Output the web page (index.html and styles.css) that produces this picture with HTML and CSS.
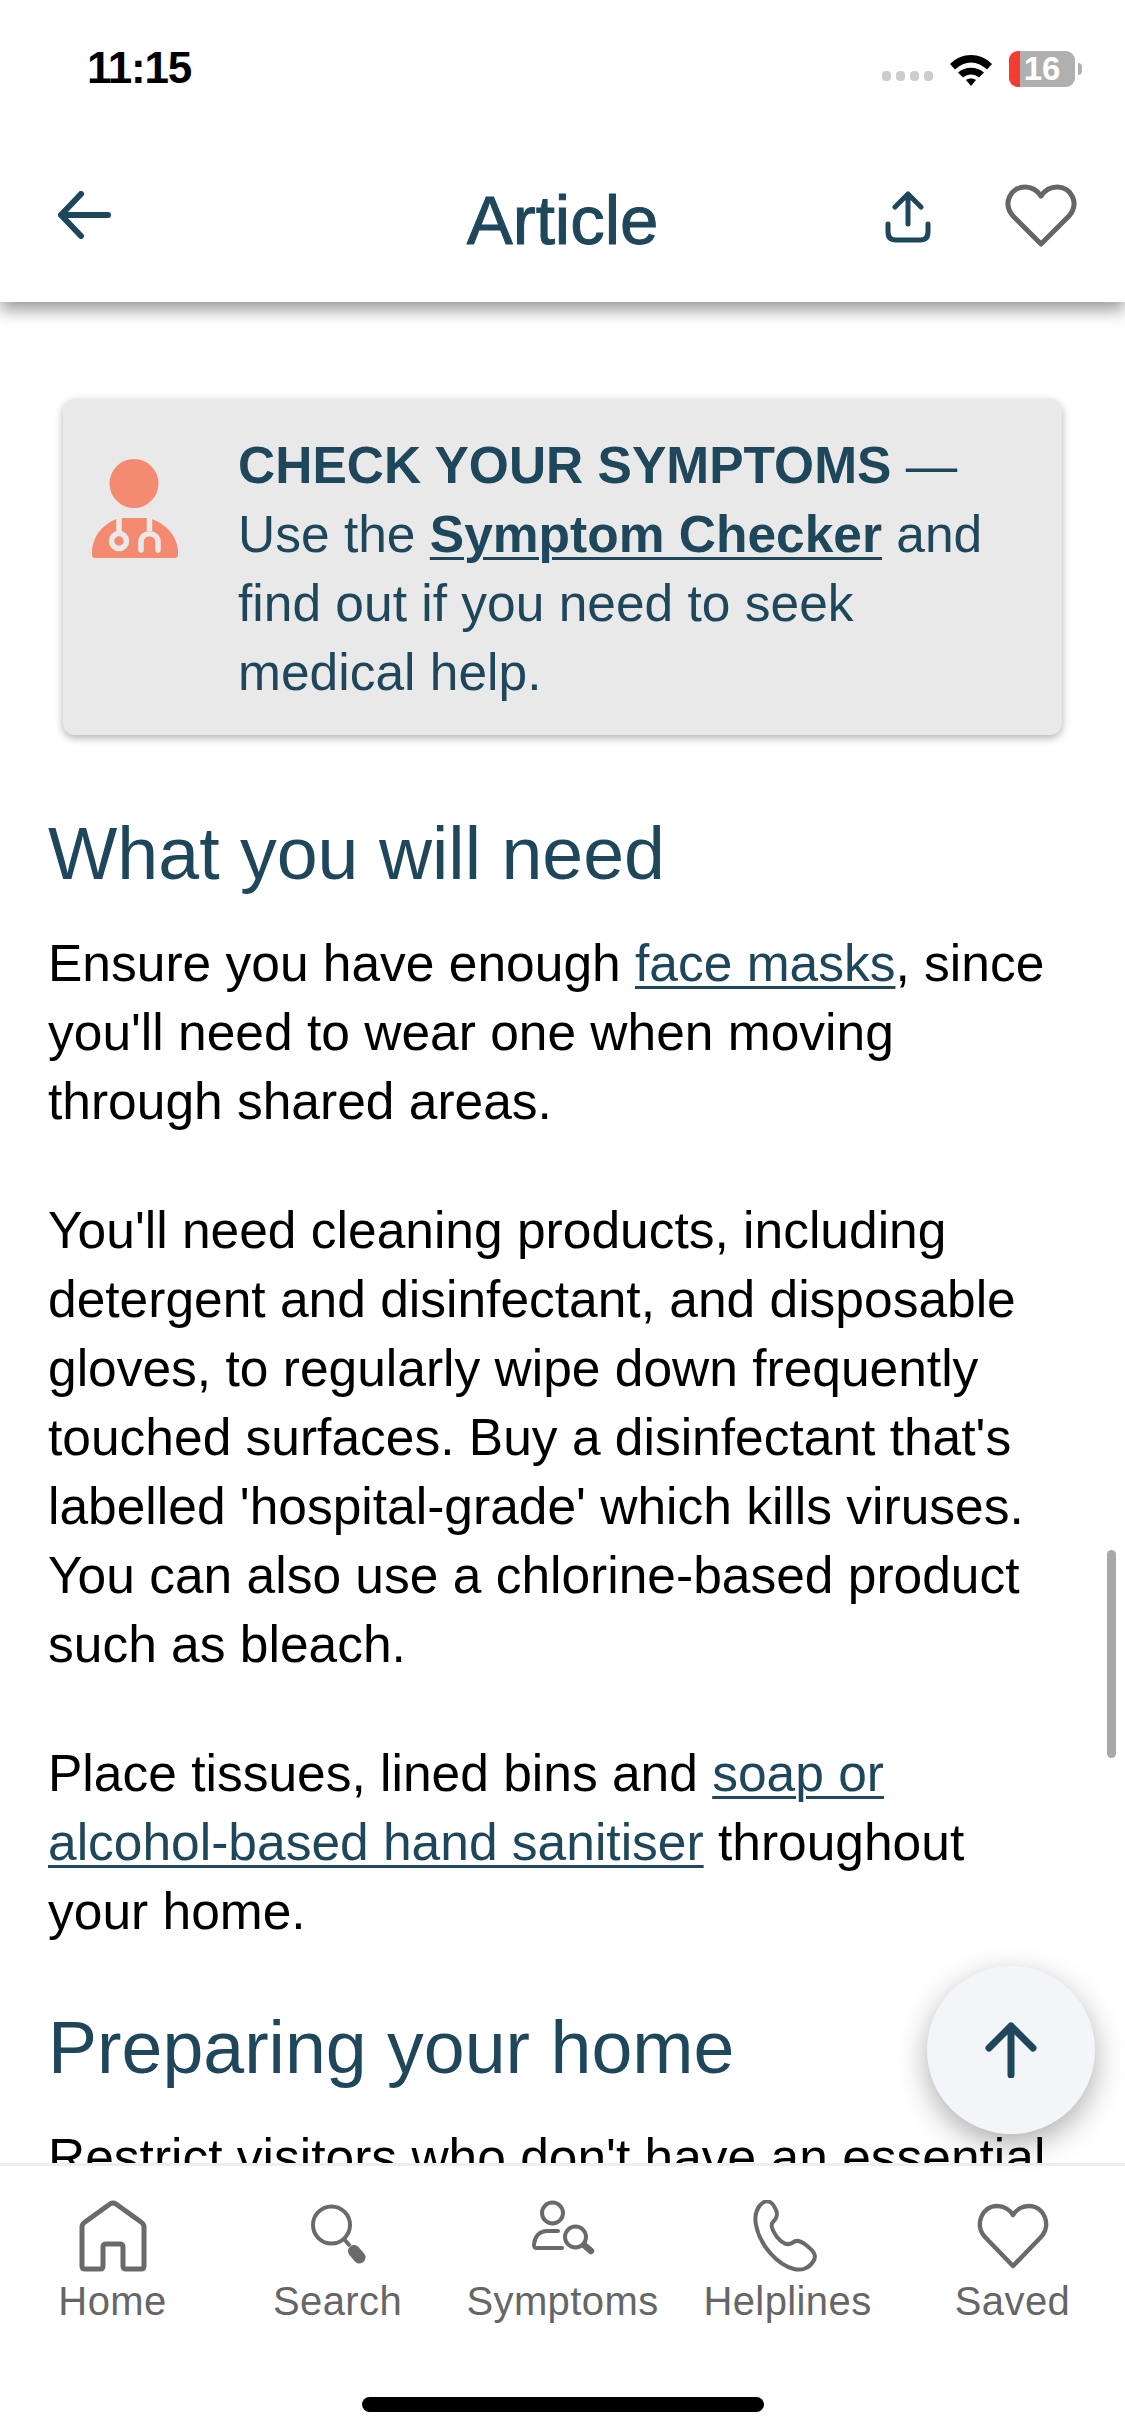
FILE: index.html
```html
<!DOCTYPE html>
<html lang="en">
<head>
    <meta charset="UTF-8">
    <title>Article</title>
    <link rel="stylesheet" href="styles.css">
</head>
<body>
    <div class="phone">
        <div class="status-bar">
            <span class="time">11:15</span>
            <div class="status-icons">
                <div class="signal"><i></i><i></i><i></i><i></i></div>
                <svg class="wifi" width="46" height="33" viewBox="0 0 44 33">
                    <path d="M1 11 C13 -1 31 -1 43 11 L38 16.500 C28 7 16 7 6 16.500 Z" fill="#000"/>
                    <path d="M9 19.500 C16 13 28 13 35 19.500 L30 24.500 C25 20.500 19 20.500 14 24.500 Z" fill="#000"/>
                    <path d="M17 27 C20 25 24 25 27 27 L22 33 Z" fill="#000"/>
                </svg>
                <div class="battery">
                    <div class="battery-body"><span class="battery-low"></span><span class="battery-num">16</span></div>
                    <span class="battery-cap"></span>
                </div>
            </div>
        </div>

        <header class="top-bar">
            <svg class="back" width="54" height="48" viewBox="0 0 54 48">
                <path d="M24 3 L4 24 L24 45 M4 24 H51" fill="none" stroke="#1f475c" stroke-width="6" stroke-linecap="round" stroke-linejoin="round"/>
            </svg>
            <h1>Article</h1>
            <div class="top-actions">
                <svg class="share" width="46" height="52" viewBox="0 0 46 52">
                    <path d="M23 33 V3 M10 16 L23 3 L36 16 M3 33 V41 Q3 49 11 49 H35 Q43 49 43 41 V33" fill="none" stroke="#1f475c" stroke-width="5" stroke-linecap="round" stroke-linejoin="round"/>
                </svg>
                <svg width="72" height="64" viewBox="0 0 72 64">
                    <path d="M36 61 L8 33 C-3 20 6 4 20 4 C27 4 32 7 36 13 C40 7 45 4 52 4 C66 4 75 20 64 33 Z" fill="none" stroke="#666" stroke-width="5" stroke-linejoin="round"/>
                </svg>
            </div>
        </header>

        <main class="content">
            <div class="callout">
                <svg class="doctor" width="88" height="99" viewBox="0 0 88 99">
                    <circle cx="43" cy="24.500" r="24.500" fill="#f48b71"/>
                    <path d="M1 96 V92 C2 76 13 64 28 59 H58 C74 64 86 76 87 92 V96 Q87 99 84 99 H4 Q1 99 1 96 Z" fill="#f48b71"/>
                    <path d="M28 58 V74 M58.500 58 V72" stroke="#e9e9e9" stroke-width="5.500" fill="none"/>
                    <circle cx="28" cy="82" r="7.500" fill="none" stroke="#e9e9e9" stroke-width="5.500"/>
                    <path d="M50 91 V83 C50 72 67 72 67 83 V91" fill="none" stroke="#e9e9e9" stroke-width="5.500" stroke-linecap="round"/>
                </svg>
                <p><strong>CHECK YOUR SYMPTOMS</strong> — Use the <a class="bold-link" href="#">Symptom Checker</a> and find out if you need to seek medical help.</p>
            </div>

            <h2>What you will need</h2>
            <p>Ensure you have enough <a href="#">face masks</a>, since you'll need to wear one when moving through shared areas.</p>
            <p>You'll need cleaning products, including detergent and disinfectant, and disposable gloves, to regularly wipe down frequently touched surfaces. Buy a disinfectant that's labelled 'hospital-grade' which kills viruses. You can also use a chlorine-based product such as bleach.</p>
            <p>Place tissues, lined bins and <a href="#">soap or alcohol-based hand sanitiser</a> throughout your home.</p>

            <h2>Preparing your home</h2>
            <p>Restrict visitors who don't have an essential need to be in your home.</p>
        </main>

        <div class="scrollbar"></div>

        <button class="to-top">
            <svg width="52" height="56" viewBox="0 0 52 56">
                <path d="M26 53 V4 M4 26 L26 4 L48 26" fill="none" stroke="#1f475c" stroke-width="7" stroke-linecap="round" stroke-linejoin="round"/>
            </svg>
        </button>

        <nav class="tab-bar">
            <div class="tab">
                <svg width="72" height="72" viewBox="0 0 72 72">
                    <path d="M5 27 Q5 24 8 22 L33 4 Q36 2 39 4 L64 22 Q67 24 67 27 V66 Q67 69 64 69 H49 Q46 69 46 66 V47 Q46 44 43 44 H29 Q26 44 26 47 V66 Q26 69 23 69 H8 Q5 69 5 66 Z" fill="none" stroke="#6a6a6a" stroke-width="5" stroke-linejoin="round"/>
                </svg>
                <span>Home</span>
            </div>
            <div class="tab">
                <svg width="72" height="72" viewBox="0 0 72 72">
                    <circle cx="29.500" cy="25" r="18.500" fill="none" stroke="#6a6a6a" stroke-width="4"/>
                    <path d="M42 39 L48 46" stroke="#6a6a6a" stroke-width="4"/>
                    <path d="M52 51 L57.500 57.500" stroke="#6a6a6a" stroke-width="12" stroke-linecap="round"/>
                </svg>
                <span>Search</span>
            </div>
            <div class="tab">
                <svg width="72" height="72" viewBox="0 0 72 72">
                    <circle cx="25.500" cy="13" r="10.500" fill="none" stroke="#6a6a6a" stroke-width="4"/>
                    <path d="M31 31 H20 C12 31 8 37 7 44 C6.500 47 8 48 10 48 H35" fill="none" stroke="#6a6a6a" stroke-width="4" stroke-linecap="round" stroke-linejoin="round"/>
                    <circle cx="48.500" cy="37" r="10.500" fill="none" stroke="#6a6a6a" stroke-width="4"/>
                    <path d="M57 45 L64 51" stroke="#6a6a6a" stroke-width="6.500" stroke-linecap="round"/>
                </svg>
                <span>Symptoms</span>
            </div>
            <div class="tab">
                <svg width="72" height="72" viewBox="0 0 72 72">
                    <path d="M12 2 C17 0 21 3 23 8 C26 13 26 17 21 22 C18 25 20 30 25 37 C30 43 35 46 40 43 C44 39 49 41 54 45 C60 50 65 54 62 60 C58 68 50 71 42 69 C26 65 8 46 4 25 C2 15 5 6 12 2 Z" fill="none" stroke="#6a6a6a" stroke-width="4" stroke-linejoin="round"/>
                </svg>
                <span>Helplines</span>
            </div>
            <div class="tab">
                <svg width="72" height="72" viewBox="0 0 72 72">
                    <path d="M36 66 L8 37 C-3 25 5 6 20 6 C27 6 33 10 36 15 C39 10 45 6 52 6 C67 6 75 25 64 37 Z" fill="none" stroke="#6a6a6a" stroke-width="4.500" stroke-linejoin="round"/>
                </svg>
                <span>Saved</span>
            </div>
        </nav>

        <div class="home-bar"></div>
    </div>
</body>
</html>
```

FILE: styles.css
```css
html, body {
    margin: 0;
    padding: 0;
    background: #fff;
}
.phone {
    position: relative;
    width: 1125px;
    height: 2436px;
    overflow: hidden;
    display: flex;
    flex-direction: column;
    font-family: "Liberation Sans", Arial, sans-serif;
}
.status-bar {
    position: relative;
    z-index: 3;
    height: 135px;
    flex: none;
    display: flex;
    justify-content: space-between;
    align-items: flex-start;
    padding: 42px 43px 0 87px;
    box-sizing: border-box;
    background: #fff;
}
.time {
    font-size: 44px;
    line-height: 52px;
    font-weight: 700;
    letter-spacing: -1.2px;
    color: #000;
}
.status-icons {
    display: flex;
    align-items: center;
    gap: 15px;
    margin-top: 9px;
}
.signal {
    display: flex;
    gap: 5px;
    margin-top: 14px;
}
.signal i {
    width: 9px;
    height: 10px;
    border-radius: 4px;
    background: #ccc;
}
.battery {
    display: flex;
    align-items: center;
    gap: 3px;
}
.battery-body {
    width: 66px;
    height: 36px;
    border-radius: 9px;
    background: #b0b0b0;
    position: relative;
    overflow: hidden;
    display: flex;
    justify-content: center;
    align-items: center;
}
.battery-low {
    position: absolute;
    left: 0;
    top: 0;
    bottom: 0;
    width: 11px;
    background: #f63b30;
}
.battery-num {
    position: relative;
    color: #fff;
    font-size: 33px;
    font-weight: 700;
}
.battery-cap {
    width: 4px;
    height: 12px;
    border-radius: 0 4px 4px 0;
    background: #b0b0b0;
}
.top-bar {
    position: relative;
    z-index: 2;
    height: 167px;
    flex: none;
    display: flex;
    align-items: center;
    justify-content: space-between;
    padding: 0 48px 0 57px;
    box-sizing: border-box;
    background: #fff;
    box-shadow: 0 8px 16px rgba(0, 0, 0, 0.4);
}
.top-bar h1 {
    position: absolute;
    left: 0;
    right: 0;
    margin: 4px 0 0;
    text-align: center;
    font-size: 69px;
    font-weight: 400;
    -webkit-text-stroke: 1px #1f475c;
    color: #1f475c;
}
.back {
    margin-top: -8px;
}
.top-actions {
    display: flex;
    align-items: center;
    gap: 74px;
    margin-top: -8px;
}
.share {
    margin-top: 4px;
}
.content {
    flex: 1;
    min-height: 0;
    overflow: hidden;
    padding: 97px 48px 0;
    font-size: 51.5px;
    line-height: 69px;
    color: #000;
}
.content > p {
    margin: 0 24px 60px 0;
}
.content a {
    color: #1f475c;
    text-decoration: underline;
    text-decoration-thickness: 3px;
    text-underline-offset: 5px;
}
.content h2 {
    margin: 0 24px 33px 0;
    font-size: 73.5px;
    line-height: 84px;
    font-weight: 400;
    color: #1f475c;
}
.callout {
    display: flex;
    align-items: flex-start;
    gap: 59px;
    margin: 0 15px 77px 15px;
    padding: 32px 40px 28px 28px;
    background: #e9e9e9;
    border-radius: 12px;
    box-shadow: 0 3px 9px rgba(0, 0, 0, 0.3);
    color: #1f475c;
}
.doctor {
    flex: none;
    margin-top: 28px;
}
.callout p {
    margin: 0;
}
.callout .bold-link {
    font-weight: 700;
}
.scrollbar {
    position: absolute;
    right: 9px;
    top: 1550px;
    width: 9px;
    height: 208px;
    border-radius: 5px;
    background: #a8a8a8;
}
.to-top {
    position: absolute;
    left: 927px;
    top: 1966px;
    width: 168px;
    height: 168px;
    border: none;
    border-radius: 50%;
    background: #f3f5f8;
    box-shadow: 0 10px 30px rgba(0, 0, 0, 0.32);
    display: flex;
    justify-content: center;
    align-items: center;
    z-index: 3;
}
.tab-bar {
    flex: none;
    height: 273px;
    display: flex;
    padding: 34px 0 0;
    box-sizing: border-box;
    background: #fff;
    border-top: 3px solid #eee;
    position: relative;
    z-index: 2;
}
.tab {
    width: 225px;
    display: flex;
    flex-direction: column;
    align-items: center;
    gap: 8px;
    font-size: 40px;
    line-height: 42px;
    letter-spacing: 0.4px;
    color: #666;
}
.home-bar {
    position: absolute;
    left: 362px;
    bottom: 24px;
    width: 402px;
    height: 15px;
    border-radius: 8px;
    background: #000;
    z-index: 3;
}
```
